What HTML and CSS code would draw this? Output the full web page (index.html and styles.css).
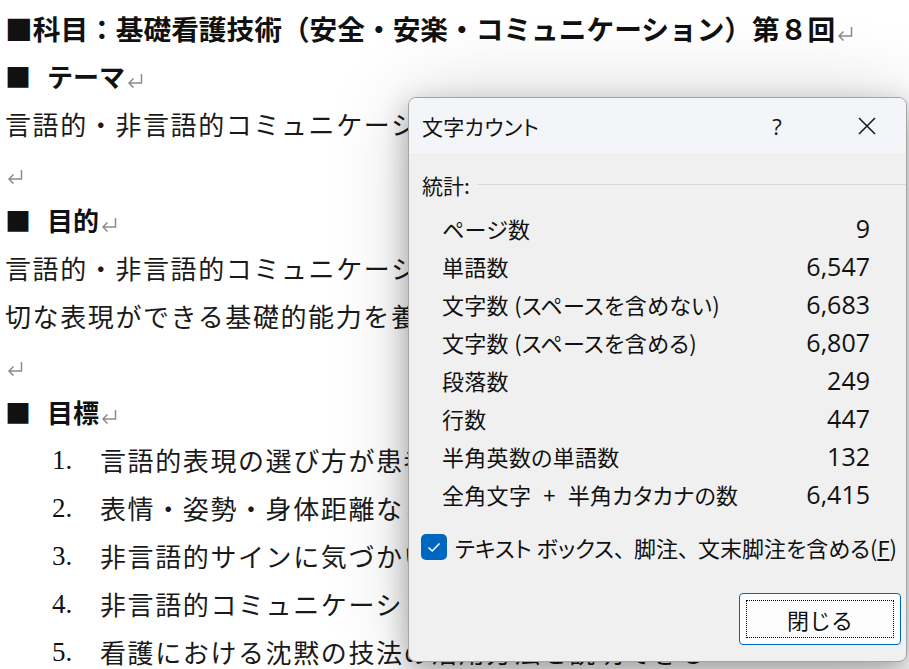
FILE: index.html
```html
<!DOCTYPE html>
<html lang="ja">
<head>
<meta charset="utf-8">
<title>文字カウント</title>
<link rel="stylesheet" href="styles.css">
</head>
<body>
<div class="doc">
  <p class="line h1">■科目：基礎看護技術（安全・安楽・コミュニケーション）第８回<svg class="ret" viewBox="0 0 18 16"><path d="M15.5 2 V11 H3 M7.5 6.5 L3 11 L7.5 15.5"/></svg></p>
  <p class="line h2"><span class="sq">■</span>テーマ<svg class="ret" viewBox="0 0 18 16"><path d="M15.5 2 V11 H3 M7.5 6.5 L3 11 L7.5 15.5"/></svg></p>
  <p class="line txt">言語的・非言語的コミュニケーションの基本と看護場面での活用</p>
  <p class="line"><svg class="ret" viewBox="0 0 18 16"><path d="M15.5 2 V11 H3 M7.5 6.5 L3 11 L7.5 15.5"/></svg></p>
  <p class="line h2"><span class="sq">■</span>目的<svg class="ret" viewBox="0 0 18 16"><path d="M15.5 2 V11 H3 M7.5 6.5 L3 11 L7.5 15.5"/></svg></p>
  <p class="line txt">言語的・非言語的コミュニケーションの特徴を理解し、看護場面で適</p>
  <p class="line txt">切な表現ができる基礎的能力を養う。</p>
  <p class="line"><svg class="ret" viewBox="0 0 18 16"><path d="M15.5 2 V11 H3 M7.5 6.5 L3 11 L7.5 15.5"/></svg></p>
  <p class="line h2"><span class="sq">■</span>目標<svg class="ret" viewBox="0 0 18 16"><path d="M15.5 2 V11 H3 M7.5 6.5 L3 11 L7.5 15.5"/></svg></p>
  <ol class="goals">
    <li class="line"><span class="num">1.</span><span class="txt">言語的表現の選び方が患者に与える影響を説明できる</span></li>
    <li class="line"><span class="num">2.</span><span class="txt">表情・姿勢・身体距離などの非言語的要素を説明できる</span></li>
    <li class="line"><span class="num">3.</span><span class="txt">非言語的サインに気づかいをもって対応できる</span></li>
    <li class="line"><span class="num">4.</span><span class="txt">非言語的コミュニケーションの活用方法を説明できる</span></li>
    <li class="line"><span class="num">5.</span><span class="txt">看護における沈黙の技法の活用方法を説明できる</span></li>
  </ol>
</div>

<div class="dialog">
  <div class="titlebar">
    <span class="title">文字カウント</span>
    <span class="help">?</span>
    <span class="close"><svg viewBox="0 0 20 20"><path d="M2 2 L18 18 M18 2 L2 18"/></svg></span>
  </div>
  <div class="dbody">
    <div class="group">統計:</div>
    <div class="stats">
      <div class="row"><span>ページ数</span><span class="val">9</span></div>
      <div class="row"><span>単語数</span><span class="val">6,547</span></div>
      <div class="row"><span>文字数 (スペースを含めない)</span><span class="val">6,683</span></div>
      <div class="row"><span>文字数 (スペースを含める)</span><span class="val">6,807</span></div>
      <div class="row"><span>段落数</span><span class="val">249</span></div>
      <div class="row"><span>行数</span><span class="val">447</span></div>
      <div class="row"><span>半角英数の単語数</span><span class="val">132</span></div>
      <div class="row"><span>全角文字<span class="plus">+</span>半角カタカナの数</span><span class="val">6,415</span></div>
    </div>
    <div class="check">
      <span class="box"><svg viewBox="0 0 26 26"><path d="M7.5 13.5 L11.2 17 L18.5 9.5"/></svg></span>
      <span class="clabel">テキスト ボックス<span class="pw">、</span>脚注<span class="pw">、</span>文末脚注を含める(<u>F</u>)</span>
    </div>
    <div class="actions">
      <button class="btn"><span class="focus">閉じる</span></button>
    </div>
  </div>
</div>
</body>
</html>
```

FILE: styles.css
```css
html, body {
  margin: 0;
  padding: 0;
  width: 909px;
  height: 669px;
  overflow: hidden;
  background: #ffffff;
}

.doc {
  padding: 4px 0 0 5px;
  font-family: "Noto Sans CJK JP", sans-serif;
  color: #111;
}

.line {
  margin: 0;
  height: 48px;
  line-height: 48px;
  white-space: nowrap;
  font-size: 26px;
}

.h1 {
  font-size: 27.7px;
  font-weight: 700;
}

.h2 {
  font-weight: 700;
  font-size: 26px;
}

.sq {
  margin-right: 16px;
}

.txt {
  font-weight: 400;
  letter-spacing: 1.6px;
  color: #1a1a1a;
}

.ret {
  width: 18px;
  height: 16px;
  vertical-align: -1px;
  margin-left: 1px;
  fill: none;
  stroke: #8c8c8c;
  stroke-width: 1.5;
}

.goals {
  list-style: none;
  margin: 0;
  padding: 0 0 0 47px;
}

.goals .line {
  display: flex;
}

.num {
  width: 48px;
  font-family: "Liberation Serif", serif;
  font-size: 27px;
}

/* dialog overlay */
.dialog {
  position: absolute;
  left: 408px;
  top: 97px;
  width: 497px;
  height: 563px;
  border: 1px solid #a4a4a4;
  border-radius: 8px;
  background: #f0f0f0;
  box-shadow: 0 10px 28px rgba(0, 0, 0, 0.32), 0 0 80px rgba(0, 0, 0, 0.17);
  font-family: "Open Sans", "Noto Sans CJK JP", sans-serif;
  font-feature-settings: "palt";
  color: #111;
  display: flex;
  flex-direction: column;
  overflow: hidden;
}

.titlebar {
  height: 55px;
  background: #f3f5f8;
  display: flex;
  align-items: center;
  padding-left: 13px;
}

.title {
  flex: 1;
  font-family: "Noto Sans CJK JP", sans-serif;
  font-size: 21px;
  letter-spacing: 0.3px;
}

.help {
  width: 50px;
  text-align: center;
  font-size: 22px;
  margin-right: 30px;
  font-family: "Open Sans", sans-serif;
}

.close {
  width: 70px;
  margin-right: 4px;
  display: flex;
  justify-content: center;
}

.close svg {
  width: 20px;
  height: 20px;
  fill: none;
  stroke: #1a1a1a;
  stroke-width: 1.6;
}

.dbody {
  display: flex;
  flex-direction: column;
}

.group {
  margin-top: 17px;
  height: 30px;
  line-height: 30px;
  padding-left: 13px;
  font-family: "Noto Sans CJK JP", sans-serif;
  font-size: 21px;
  display: flex;
  align-items: center;
}

.group::after {
  content: "";
  flex: 1;
  height: 1px;
  margin-left: 7px;
  margin-top: -2px;
  background: #d9d9d9;
}

.stats {
  margin-top: 9px;
  display: flex;
  flex-direction: column;
}

.row {
  height: 38px;
  display: flex;
  align-items: center;
  justify-content: space-between;
  padding: 0 36px 0 33px;
  font-size: 22px;
}

.row span:first-child {
  font-family: "Noto Sans CJK JP", sans-serif;
  font-size: 22px;
  letter-spacing: 0.3px;
}

.plus {
  font-family: "Open Sans", sans-serif;
  margin: 0 12px;
}

.val {
  font-family: "Open Sans", sans-serif;
  font-size: 25px;
}

.check {
  margin-top: 19px;
  height: 30px;
  display: flex;
  align-items: center;
  padding-left: 12px;
}

.box {
  width: 26px;
  height: 26px;
  border-radius: 5px;
  background: #0067c0;
  display: flex;
  margin-right: 8px;
}

.box svg {
  width: 26px;
  height: 26px;
  fill: none;
  stroke: #ffffff;
  stroke-width: 1.6;
}

.clabel {
  font-family: "Noto Sans CJK JP", sans-serif;
  font-size: 22px;
}

.pw {
  margin-right: 9px;
}

.actions {
  margin-top: 31px;
  display: flex;
  justify-content: flex-end;
  padding-right: 5px;
}

.btn {
  width: 162px;
  height: 52px;
  border: 1px solid #0067c0;
  border-radius: 4px;
  background: #fdfdfd;
  padding: 6px;
  display: flex;
}

.focus {
  flex: 1;
  border: 1px dotted #000;
  display: flex;
  align-items: center;
  justify-content: center;
  font-family: "Noto Sans CJK JP", sans-serif;
  font-size: 22px;
  color: #111;
}
```
